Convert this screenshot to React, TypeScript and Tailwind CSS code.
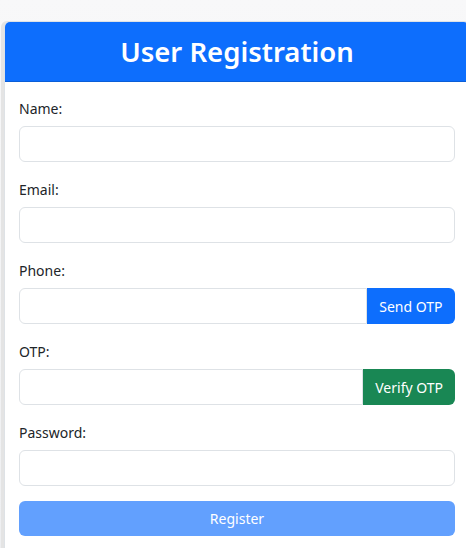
import React from 'react';

const font = { fontFamily: '"Noto Sans", "Open Sans", Arial, sans-serif' };

function Field({ label, type = 'text', action }: { label: string; type?: string; action?: React.ReactNode }) {
  return (
    <div className="mb-[18px]">
      <label className="block text-[14px] leading-[20px] text-[#212529] mb-[7px]">{label}</label>
      <div className="flex h-[36px]">
        <input
          type={type}
          className={
            'h-full flex-1 min-w-0 border border-[#dee2e6] bg-white px-3 outline-none ' +
            (action ? 'rounded-l-[6px]' : 'rounded-[6px]')
          }
        />
        {action}
      </div>
    </div>
  );
}

export default function App() {
  return (
    <div className="h-screen w-screen overflow-hidden bg-gradient-to-b from-[#f8f8f9] to-[#eeeff1] pt-[21px] pl-[4px]" style={font}>
      <div className="w-[466px] rounded-t-[6px] border border-[#dee2e6] bg-white pb-[24px] shadow-[-3px_0_0_#e4e4e4]">
        <div className="flex h-[60px] items-center justify-center rounded-t-[5px] border-b border-[#0b5ed7] bg-[#0d6efd]">
          <h1 className="text-[27.5px] font-semibold leading-none text-white">User Registration</h1>
        </div>
        <div className="px-[14px] pt-[17px]">
          <Field label="Name:" />
          <Field label="Email:" type="email" />
          <Field
            label="Phone:"
            action={
              <button className="h-full rounded-r-[6px] bg-[#0d6efd] px-[12.5px] text-[14px] text-white">Send OTP</button>
            }
          />
          <Field
            label="OTP:"
            action={
              <button className="h-full rounded-r-[6px] bg-[#198754] px-[12px] text-[14px] text-white">Verify OTP</button>
            }
          />
          <div className="mb-[15px]">
            <label className="block text-[14px] leading-[20px] text-[#212529] mb-[7px]">Password:</label>
            <input type="password" className="h-[36px] w-full rounded-[6px] border border-[#dee2e6] bg-white px-3 outline-none" />
          </div>
          <button disabled className="h-[35px] w-full rounded-[6px] bg-[#62a0fe] text-[14px] text-white">
            Register
          </button>
        </div>
      </div>
    </div>
  );
}
